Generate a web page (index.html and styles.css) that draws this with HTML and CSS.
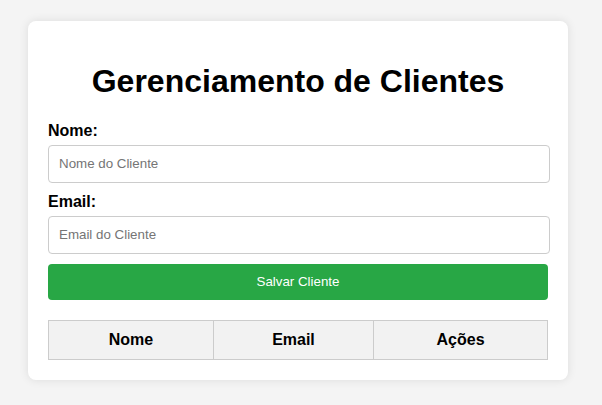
FILE: index.html
```
<!DOCTYPE html>
<html lang="pt">
<head>
<meta charset="utf-8">
<title>Gerenciamento de Clientes</title>
<link rel="stylesheet" href="styles.css">
</head>
<body>
<div class="container">
  <h1>Gerenciamento de Clientes</h1>
  <form class="form">
    <label for="nome">Nome:</label>
    <input type="text" id="nome" placeholder="Nome do Cliente">
    <label for="email">Email:</label>
    <input type="email" id="email" placeholder="Email do Cliente">
    <button type="button">Salvar Cliente</button>
  </form>
  <table>
    <thead>
      <tr><th>Nome</th><th>Email</th><th>Ações</th></tr>
    </thead>
    <tbody></tbody>
  </table>
</div>
</body>
</html>
```
FILE: styles.css
```
body {
  margin: 0;
  padding: 20px 28px;
  background: #f4f4f4;
  font-family: "Liberation Sans", Arial, sans-serif;
}
.container {
  width: 500px;
  margin-top: 1px;
  padding: 20px;
  background: #fff;
  border-radius: 8px;
  box-shadow: 0 0 10px rgba(0, 0, 0, 0.1);
}
h1 {
  text-align: center;
  font-size: 32px;
  margin: 22px 0;
}
label {
  display: block;
  font-weight: bold;
  font-size: 16px;
  margin-bottom: 5px;
}
input {
  display: block;
  width: calc(100% - 20px);
  padding: 10px;
  margin: 0 0 10px;
  border: 1px solid #ccc;
  border-radius: 4px;
  font-family: "Liberation Sans", Arial, sans-serif;
  font-size: 13.33px;
  line-height: 16px;
}
button {
  display: block;
  width: 100%;
  padding: 10px;
  border: none;
  border-radius: 4px;
  background: #28a745;
  color: #fff;
  font-family: "Liberation Sans", Arial, sans-serif;
  font-size: 13.33px;
  line-height: 16px;
}
table {
  width: 100%;
  margin-top: 20px;
  border-collapse: collapse;
}
th {
  padding: 10px;
  border: 1px solid #ccc;
  background: #f2f2f2;
  font-size: 16px;
}
```
